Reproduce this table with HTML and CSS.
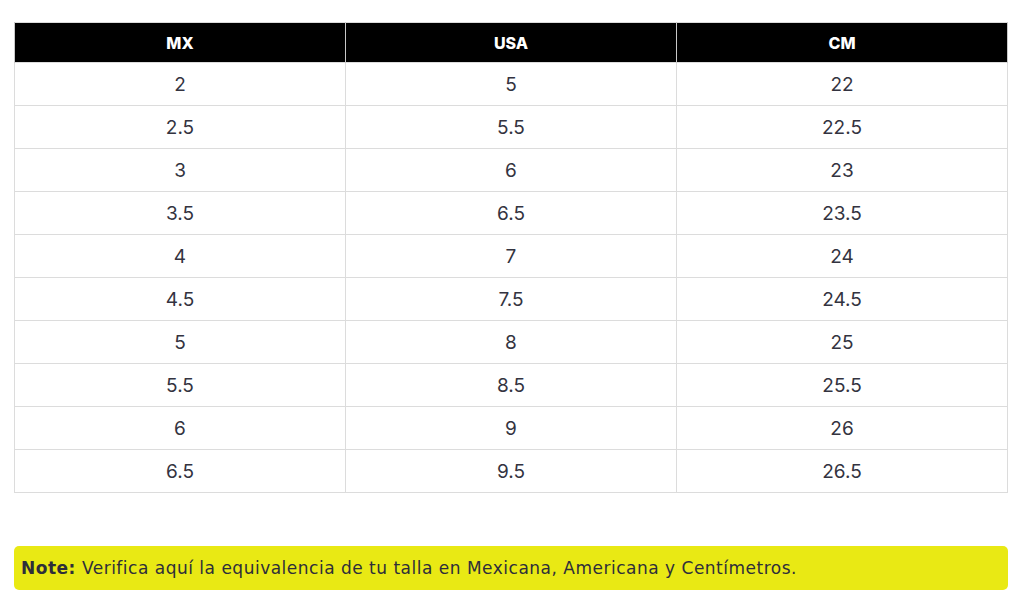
FILE: index.html
```html
<!DOCTYPE html>
<html lang="es">
<head>
<meta charset="utf-8">
<link rel="stylesheet" href="styles.css">
</head>
<body>
<div class="page">
  <table class="sizes">
    <thead>
      <tr><th>MX</th><th>USA</th><th>CM</th></tr>
    </thead>
    <tbody>
      <tr><td>2</td><td>5</td><td>22</td></tr>
      <tr><td>2.5</td><td>5.5</td><td>22.5</td></tr>
      <tr><td>3</td><td>6</td><td>23</td></tr>
      <tr><td>3.5</td><td>6.5</td><td>23.5</td></tr>
      <tr><td>4</td><td>7</td><td>24</td></tr>
      <tr><td>4.5</td><td>7.5</td><td>24.5</td></tr>
      <tr><td>5</td><td>8</td><td>25</td></tr>
      <tr><td>5.5</td><td>8.5</td><td>25.5</td></tr>
      <tr><td>6</td><td>9</td><td>26</td></tr>
      <tr><td>6.5</td><td>9.5</td><td>26.5</td></tr>
    </tbody>
  </table>
  <div class="note"><strong>Note:</strong> Verifica aquí la equivalencia de tu talla en Mexicana, Americana y Centímetros.</div>
</div>
</body>
</html>
```
FILE: styles.css
```css
html, body {
  margin: 0;
  padding: 0;
  background: #fff;
}
.page {
  padding: 22px 16px 0 14px;
  font-family: Inter, "Open Sans", sans-serif;
}
.sizes {
  width: 100%;
  border-collapse: collapse;
  table-layout: fixed;
  border: 1px solid #dcdcdc;
}
.sizes th {
  background: #000;
  color: #fff;
  font-weight: 800;
  font-size: 16px;
  height: 39px;
  padding: 0;
  text-align: center;
  border-left: 1px solid #c8c8c8;
  border-right: 1px solid #c8c8c8;
}
.sizes td {
  height: 42px;
  padding: 0;
  text-align: center;
  font-size: 19px;
  color: #333340;
  border: 1px solid #dcdcdc;
}
.note {
  margin-top: 53px;
  background: #e9e914;
  border-radius: 5px;
  height: 44px;
  display: flex;
  align-items: center;
  padding: 0 7px;
  font-size: 17px;
  letter-spacing: 0.5px;
  color: #2e2e3a;
  font-family: "DejaVu Sans", Inter, sans-serif;
}
.note strong {
  font-weight: 700;
  margin-right: 6px;
}
```
